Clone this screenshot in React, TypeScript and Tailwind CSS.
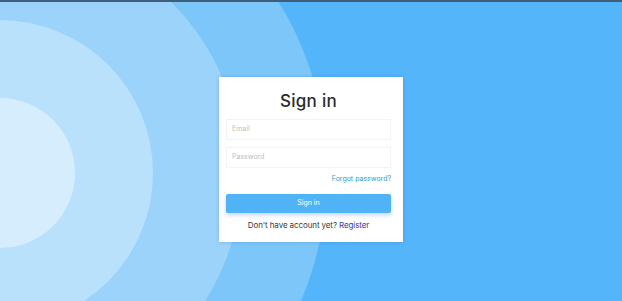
export default function App() {
  return (
    <div
      className="relative w-[622px] h-[301px] overflow-hidden bg-[#55b5fb]"
      style={{ fontFamily: 'Inter, "Noto Sans", sans-serif' }}
    >
      {/* Background rings */}
      <div className="absolute left-[-327px] top-[-154px] w-[654px] h-[654px] rounded-full bg-[#7cc6fa]" />
      <div className="absolute left-[-242px] top-[-69px] w-[484px] h-[484px] rounded-full bg-[#9bd3fb]" />
      <div className="absolute left-[-153px] top-[20px] w-[306px] h-[306px] rounded-full bg-[#b9e1fc]" />
      <div className="absolute left-[-75px] top-[98px] w-[150px] h-[150px] rounded-full bg-[#d5edfd]" />

      {/* Top strip */}
      <div className="absolute inset-x-0 top-0 h-[2px] bg-[#3f5e7c]" />

      <div className="relative flex justify-center pt-[77px]">
        <div className="w-[184px] h-[165px] bg-white shadow-[0_0_4px_rgba(0,0,0,0.15)] pl-[7px] pr-[12px] pt-[14px] flex flex-col">
          <h1 className="text-center text-[17px] leading-[21px] font-medium tracking-[0.3px] text-[#2b2b2b]">Sign in</h1>
          <div className="mt-[7px] h-[21px] border border-[#f1f3f6] flex items-center px-[5px] text-[7px] text-[#babec4]">
            Email
          </div>
          <div className="mt-[7px] h-[21px] border border-[#f1f3f6] flex items-center px-[5px] text-[7px] text-[#babec4]">
            Password
          </div>
          <div className="mt-[6px] text-right text-[7px] text-[#22a4d6]">Forgot password?</div>
          <button className="mt-[9px] h-[19px] w-full rounded-[2px] bg-[#4fb3f6] text-white text-[7px] shadow-[0_2px_4px_rgba(79,120,246,0.35)]">
            Sign in
          </button>
          <div className="mt-[6px] text-center text-[8px] tracking-[-0.1px] text-[#3a3a3a]">
            Don't have account yet? <span className="text-[#3a37a8]">Register</span>
          </div>
        </div>
      </div>
    </div>
  );
}
